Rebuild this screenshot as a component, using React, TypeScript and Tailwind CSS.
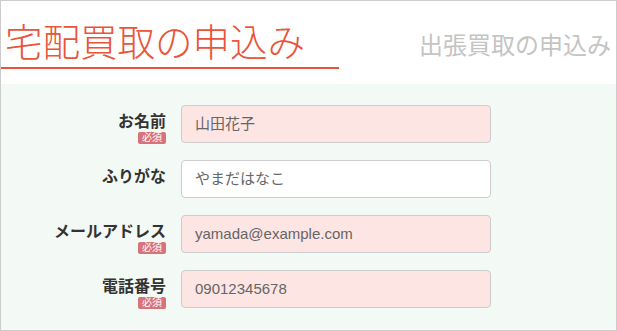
const fields = [
  { label: 'お名前', value: '山田花子', required: true },
  { label: 'ふりがな', value: 'やまだはなこ', required: false },
  { label: 'メールアドレス', value: 'yamada@example.com', required: true },
  { label: '電話番号', value: '09012345678', required: true },
];

export default function App() {
  return (
    <div
      className="w-[617px] h-[331px] border border-[#cccccc] bg-white flex flex-col overflow-hidden"
      style={{ fontFamily: '"Noto Sans CJK JP", "Noto Sans", sans-serif' }}
    >
      {/* tabs */}
      <div className="h-[83px] flex items-start justify-between shrink-0">
        <div className="w-[338px] h-[68px] border-b-2 border-[#e8553a] flex items-end pl-[4px] pb-[9px]">
          <span className="text-[37.5px] leading-none text-[#e8553a] font-light">宅配買取の申込み</span>
        </div>
        <div className="pt-[31px] pr-[5px]">
          <span className="text-[24px] leading-none text-[#c4c4c4]">出張買取の申込み</span>
        </div>
      </div>

      {/* form */}
      <div className="flex-1 bg-[#f3f9f4] pt-[21px] flex flex-col gap-[17px]">
        {fields.map((f) => (
          <div key={f.label} className="flex items-start h-[38px]">
            <div
              className="w-[165px] flex flex-col items-end pt-[8px]"
              style={{ fontFamily: '"Liberation Sans", "Noto Sans CJK JP", sans-serif' }}
            >
              <span className="text-[16px] leading-[18px] font-bold text-[#333333]">{f.label}</span>
              {f.required && (
                <span className="mt-[1px] w-[28px] h-[12px] rounded-[2px] bg-[#d9737a] text-white text-[10px] leading-[12px] text-center">
                  必須
                </span>
              )}
            </div>
            <div
              className={
                'ml-[15px] w-[310px] h-[38px] rounded-[4px] border border-[#cccccc] flex items-center pl-[13px] text-[15px] text-[#666666] ' +
                (f.required ? 'bg-[#fce5e3]' : 'bg-white')
              }
              style={{ fontFamily: '"Liberation Sans", "Noto Sans CJK JP", sans-serif' }}
            >
              {f.value}
            </div>
          </div>
        ))}
      </div>
    </div>
  );
}
